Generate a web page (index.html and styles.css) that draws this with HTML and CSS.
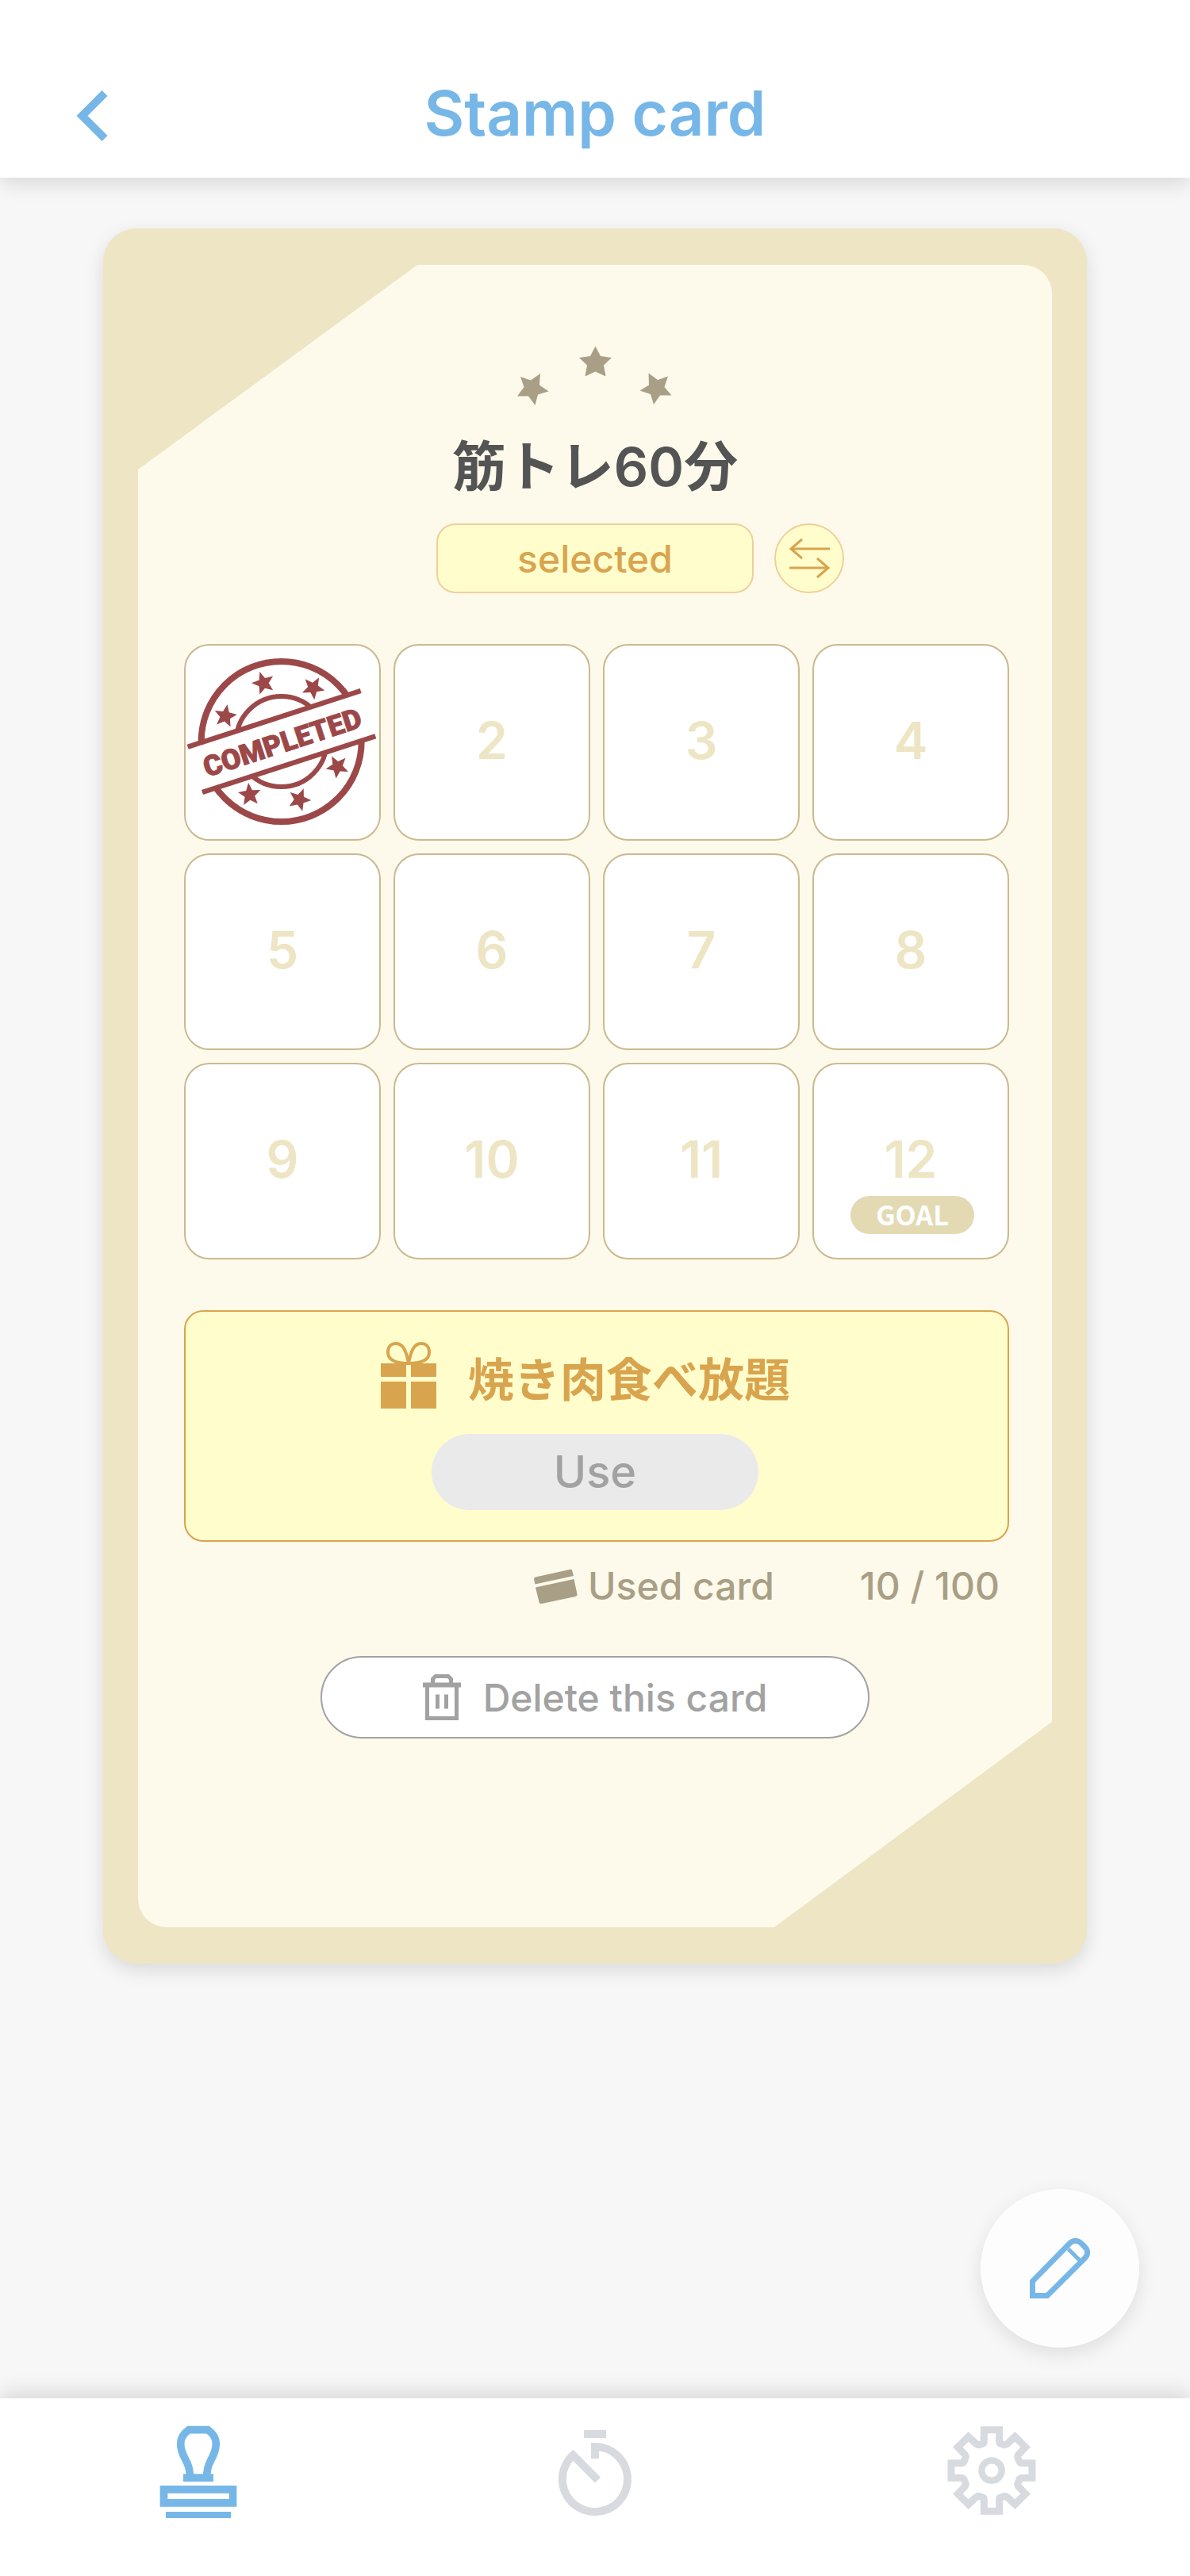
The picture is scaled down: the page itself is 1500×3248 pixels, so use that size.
FILE: index.html
```html
<!DOCTYPE html>
<html lang="ja">
<head>
<meta charset="utf-8">
<meta name="viewport" content="width=device-width, initial-scale=1">
<title>Stamp card</title>
<link rel="stylesheet" href="styles.css">
</head>
<body>
<header class="topbar">
  <a class="back" href="#" aria-label="Back">
    <svg width="40" height="64" viewBox="0 0 40 64"><path d="M36 3.500L7.500 32 36 60.500" fill="none" stroke="currentColor" stroke-width="10"/></svg>
  </a>
  <h1 class="topbar-title">Stamp card</h1>
</header>

<main class="content">
  <article class="card">
    <div class="card-face">
      <div class="card-head">
        <svg class="stars" width="200" height="76" viewBox="650 436 200 76" fill="currentColor" aria-hidden="true">
          <path d="M750.500 436.500L757 449 771 451 761 460.500 763.500 474.500 750.500 468.500 737.500 474.500 740 460.500 730 451 744 449z"/>
          <path d="M681 471L680 485.500 691.500 493.500 678 497.500 674.500 511 666 499.500 652 499.500 660.500 488 656 475 669 479.500z"/>
          <path d="M817.500 470.500L829 479 842 474.500 837.500 488 846.500 498.500 832 498.500 824 510 820 497 806.500 492.500 818 485.500z"/>
        </svg>
        <h2 class="card-title">筋トレ60分</h2>
        <div class="card-actions">
          <button class="select-button" type="button">selected</button>
          <button class="swap-button" type="button" aria-label="Switch card">
            <svg width="52" height="52" viewBox="0 0 52 52" fill="none" stroke="currentColor" stroke-width="3"><path d="M52 14H3M17 2L3 14 17 26M1 38H50M36 26L50 38 36 50"/></svg>
          </button>
        </div>
      </div>

      <div class="card-main">
        <ol class="stamps">
          <li class="stamp stamp-done">
            <svg class="stamp-mark" viewBox="58 73 732 732" role="img" aria-label="Completed">
              <defs><path id="star" d="M0-45L11.800-16.200 42.800-13.900 19 6.200 26.500 36.400 0 20-26.500 36.400-19 6.200-42.800-13.900-11.800-16.200z"/></defs>
              <g fill="none" stroke="currentColor">
                <circle cx="420" cy="436" r="303" stroke-width="24"/>
                <circle cx="420" cy="436" r="171" stroke-width="18"/>
              </g>
              <path d="M66 456L720 244 776 416 121 628z" fill="#fff"/>
              <path d="M66 456L720 244M121 628L776 416" stroke="currentColor" stroke-width="19"/>
              <g fill="currentColor">
                <use href="#star" transform="translate(352 215) rotate(-18)"/>
                <use href="#star" transform="translate(540 233) rotate(30)"/>
                <use href="#star" transform="translate(208 340) rotate(10)"/>
                <use href="#star" transform="translate(632 531) rotate(-29)"/>
                <use href="#star" transform="translate(300 637) rotate(-6)"/>
                <use href="#star" transform="translate(488 656) rotate(21)"/>
                <text class="stamp-text" transform="translate(423 438) rotate(-18)" y="39" text-anchor="middle">COMPLETED</text>
              </g>
            </svg>
          </li>
          <li class="stamp">2</li>
          <li class="stamp">3</li>
          <li class="stamp">4</li>
          <li class="stamp">5</li>
          <li class="stamp">6</li>
          <li class="stamp">7</li>
          <li class="stamp">8</li>
          <li class="stamp">9</li>
          <li class="stamp">10</li>
          <li class="stamp">11</li>
          <li class="stamp">12<span class="goal">GOAL</span></li>
        </ol>

        <section class="reward">
          <h3 class="reward-title">
            <svg width="70" height="84" viewBox="0 0 70 84" fill="currentColor" aria-hidden="true">
              <path d="M0 27h32v17H0zM38 27h32v17H38zM0 50h32v34H0zM38 50h32v34H38z"/>
              <path d="M35 27C20 27 9 23 9 13 9 5 14 2 19 2 28 2 32 11 35 27zM35 27C50 27 61 23 61 13 61 5 56 2 51 2 42 2 38 11 35 27z" fill="none" stroke="currentColor" stroke-width="4"/>
            </svg>
            <span class="reward-name">焼き肉食べ放題</span>
          </h3>
          <button class="use-button" type="button" disabled>Use</button>
        </section>

        <p class="usage">
          <svg width="56" height="44" viewBox="0 0 56 44" fill="currentColor" aria-hidden="true">
            <path d="M0 13Q0 11 2 10.500L45 1Q48 0 48.500 3L50 9 1.500 19.500zM2 23.500L50.500 13 54.500 32Q55 34 52.500 35L10 44Q7 44.500 6.500 42z"/>
          </svg>
          <span class="usage-label">Used card</span>
          <span>10 / 100</span>
        </p>
      </div>

      <button class="delete-button" type="button">
        <svg width="48" height="58" viewBox="0 0 48 58" aria-hidden="true">
          <path d="M12.500 13V6L16 2.500H32L35.500 6V13" fill="none" stroke="currentColor" stroke-width="5"/>
          <path d="M0 10.500h48v6H0zM16 25.500h5v18h-5zM27 25.500h5v18h-5z" fill="currentColor"/>
          <path d="M5.500 14V55.500H42.500V14" fill="none" stroke="currentColor" stroke-width="5"/>
        </svg>
        Delete this card
      </button>
    </div>
  </article>
</main>

<button class="fab" type="button" aria-label="Edit">
  <svg width="76" height="76" viewBox="294 306 228 228" fill="none" stroke="currentColor" stroke-width="21">
    <path d="M304.500 469V523.500H360L503 381Q512 372 512 360 512 348 503 340L488 325Q478 316 467 316 455 316 446 325z"/>
    <path d="M440 347L482 389" stroke-width="15"/>
  </svg>
</button>

<nav class="tabbar">
  <a class="tab tab-active" href="#" aria-label="Stamp cards">
    <svg width="140" height="140" viewBox="0 0 420 420" fill="none" stroke="currentColor" stroke-width="29">
      <path d="M178 252Q180 217 162 185 143 150 143 124 143 92 174 71H246Q277 92 277 124 277 150 258 185 240 217 243 252"/>
      <path d="M153 238h114v29H153zM87 381h246v24H87z" fill="currentColor" stroke="none"/>
      <path d="M79.500 296.500h261v51h-261z"/>
    </svg>
  </a>
  <a class="tab" href="#" aria-label="Timer">
    <svg width="140" height="140" viewBox="0 0 420 420" fill="none" stroke="currentColor" stroke-width="30">
      <path d="M210 180V135A123 123 0 1 1 127 167L220.500 261M168 87H252"/>
    </svg>
  </a>
  <a class="tab" href="#" aria-label="Settings">
    <svg width="140" height="140" viewBox="0 0 420 420" fill="none" stroke="currentColor" stroke-width="27">
      <path d="M181 71V116Q181 122 174 124L162 128Q156 128 151 124L122 97 82 137 109 165Q113 170 111 176L107 187Q104 196 98 197H57V253H98Q104 254 107 263L111 274Q113 280 109 285L82 313 122 353 151 326Q156 322 162 322L174 326Q181 328 181 334V379H239V334Q239 328 246 326L258 322Q264 322 269 326L298 353 338 313 311 285Q307 280 309 274L313 263Q316 254 322 253H363V197H322Q316 196 313 187L309 176Q307 170 311 165L338 137 298 97 269 124Q264 128 258 128L246 124Q239 122 239 116V71z"/>
      <circle cx="210" cy="225" r="38" stroke-width="25"/>
    </svg>
  </a>
</nav>
</body>
</html>
```

FILE: styles.css
```css
:root {
  --blue: #77b7e8;
  --sand: #ede5c4;
  --cream: #fdfaeb;
  --taupe: #a99f86;
  --gold: #d9a44e;
  --lemon: #fffdcc;
  --gray: #a2a2a2;
}

* {
  box-sizing: border-box;
}

body {
  margin: 0;
  min-height: 100vh;
  display: flex;
  flex-direction: column;
  background: #f7f7f7;
  font-family: Inter, "Noto Sans CJK JP", sans-serif;
  font-weight: 500;
}

h1, h2, h3, p, ol {
  margin: 0;
  padding: 0;
}

button {
  padding: 0;
  border: 0;
  font: inherit;
  cursor: pointer;
}

svg {
  display: block;
  flex: none;
}

/* Top bar */
.topbar {
  display: grid;
  grid-template-columns: 1fr auto 1fr;
  align-items: center;
  padding: 68px 96px 0;
  height: 224px;
  background: #fff;
  box-shadow: 0 8px 24px rgba(0, 0, 0, 0.12);
  color: var(--blue);
}

.back {
  justify-self: start;
  color: inherit;
}

.topbar-title {
  padding-bottom: 6px;
  font-size: 78px;
  line-height: 96px;
  font-weight: 600;
}

/* Card */
.content {
  flex: 1;
  padding: 64px 130px;
}

.card {
  padding: 46px 44px;
  border-radius: 42px;
  background: var(--sand);
  box-shadow: 0 8px 24px rgba(0, 0, 0, 0.12);
}

.card-face {
  display: flex;
  flex-direction: column;
  align-items: center;
  padding: 102px 0 238px;
  border-radius: 36px;
  background: var(--cream);
  clip-path: polygon(352px 0, 100% 0, 100% calc(100% - 259px), calc(100% - 350px) 100%, 0 100%, 0 258px);
}

.card-head {
  display: flex;
  flex-direction: column;
  align-items: center;
  width: 100%;
}

.stars {
  color: var(--taupe);
}

.card-title {
  margin: 32px 0 28px;
  color: #545454;
  font-size: 68px;
  line-height: 88px;
  font-weight: 600;
}

.card-actions {
  display: grid;
  grid-template-columns: 1fr 400px 1fr;
  gap: 26px;
  width: 100%;
}

.select-button,
.swap-button {
  height: 88px;
  border: 2px solid #f0cf9a;
  background: var(--lemon);
  color: var(--gold);
}

.select-button {
  grid-column: 2;
  border-radius: 24px;
  font-size: 48px;
}

.swap-button {
  display: grid;
  place-items: center;
  width: 88px;
  border-radius: 50%;
}

.card-main {
  align-self: stretch;
  margin: 64px 54px 56px 58px;
}

.stamps {
  display: grid;
  grid-template-columns: repeat(4, 1fr);
  gap: 16px;
  list-style: none;
}

.stamp {
  position: relative;
  display: grid;
  place-items: center;
  aspect-ratio: 1;
  padding-bottom: 4px;
  border: 2px solid #cbb98f;
  border-radius: 32px;
  background: #fff;
  color: var(--sand);
  font-size: 64px;
  line-height: 64px;
  font-weight: 600;
}

.stamp-done {
  padding: 0;
}

.stamp-mark {
  width: 100%;
  color: #9c4849;
}

.stamp-text {
  font-family: Roboto, "Liberation Sans", sans-serif;
  font-size: 107px;
  font-weight: 900;
  stroke: currentColor;
  stroke-width: 3px;
}

.goal {
  position: absolute;
  right: 42px;
  bottom: 30px;
  width: 156px;
  padding-bottom: 2px;
  border-radius: 24px;
  background: #e3dab4;
  color: #fff;
  font-family: "Noto Sans CJK JP", sans-serif;
  font-size: 34px;
  line-height: 46px;
  font-weight: 700;
  text-align: center;
}

.reward {
  display: flex;
  flex-direction: column;
  align-items: center;
  gap: 32px;
  margin-top: 64px;
  padding: 38px 4px 38px 0;
  border: 2px solid var(--gold);
  border-radius: 24px;
  background: var(--lemon);
}

.reward-title {
  display: flex;
  align-items: center;
  gap: 40px;
  padding-right: 24px;
  color: var(--gold);
  font-size: 58px;
  line-height: 72px;
  font-weight: 700;
}

.reward-name {
  padding-top: 12px;
}

.use-button {
  width: 412px;
  height: 96px;
  border-radius: 48px;
  background: #eaeaea;
  color: var(--gray);
  font-size: 56px;
}

.usage {
  display: flex;
  align-items: center;
  justify-content: flex-end;
  gap: 12px;
  margin-top: 24px;
  padding-right: 12px;
  color: var(--taupe);
  font-size: 48px;
  line-height: 64px;
}

.usage-label {
  margin-right: 96px;
}

.delete-button {
  display: flex;
  align-items: center;
  justify-content: center;
  gap: 28px;
  width: 692px;
  height: 104px;
  border: 2px solid var(--gray);
  border-radius: 52px;
  background: #fff;
  color: var(--gray);
  font-size: 48px;
}

/* Floating edit button */
.fab {
  position: fixed;
  right: 64px;
  bottom: 288px;
  display: grid;
  place-items: center;
  width: 200px;
  height: 200px;
  border-radius: 50%;
  background: #fdfdfd;
  box-shadow: 0 8px 24px rgba(0, 0, 0, 0.1);
  color: var(--blue);
}

/* Bottom navigation */
.tabbar {
  position: sticky;
  bottom: 0;
  display: grid;
  grid-template-columns: repeat(3, 1fr);
  justify-items: center;
  padding: 16px 0 68px;
  background: #fff;
  box-shadow: 0 -8px 24px rgba(0, 0, 0, 0.12);
}

.tab {
  color: #d7dadf;
}

.tab-active {
  color: var(--blue);
}
```
